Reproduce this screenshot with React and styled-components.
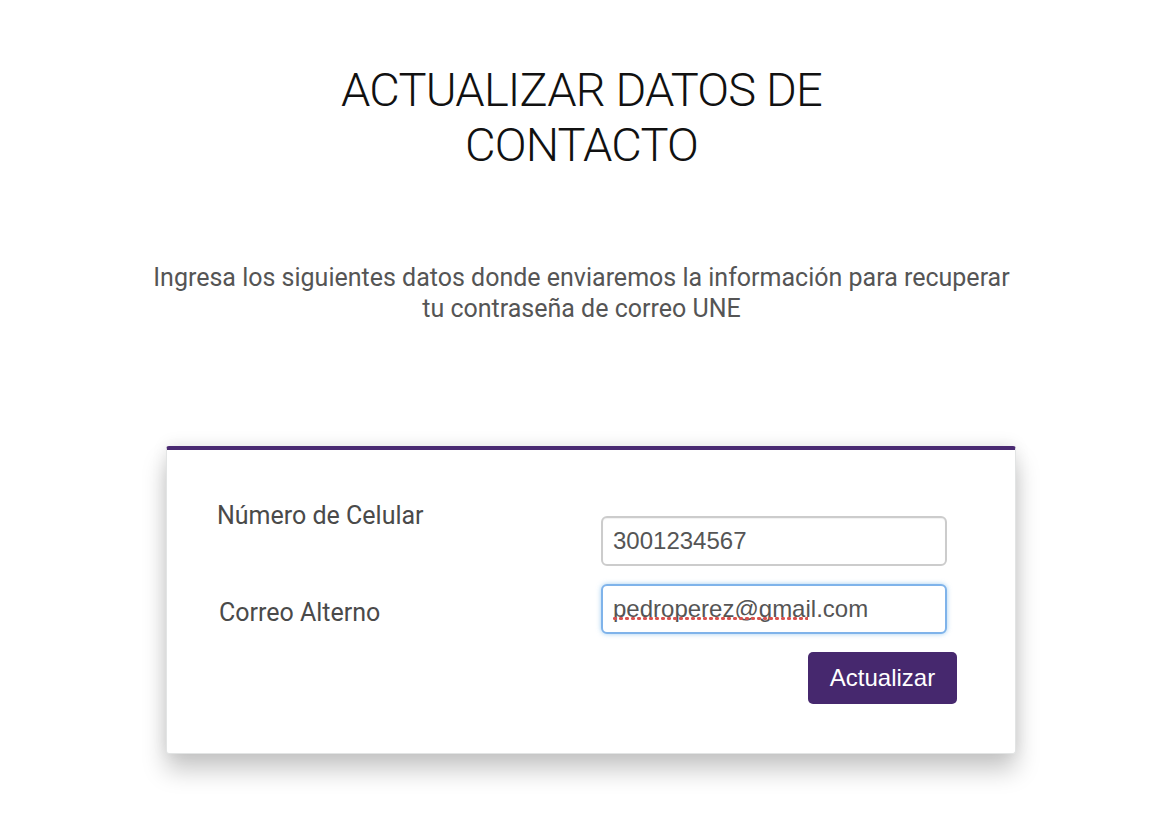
import React from 'react';
import styled, { createGlobalStyle } from 'styled-components';

const GlobalStyle = createGlobalStyle`
  html, body {
    margin: 0;
    padding: 0;
    background: #ffffff;
  }

  body {
    font-family: Roboto, "Noto Sans", sans-serif;
  }
`;

const Page = styled.main`
  width: 1163px;
  min-height: 817px;
  padding-top: 62px;
  box-sizing: border-box;
`;

const Title = styled.h1`
  margin: 0 auto;
  width: 520px;
  font-family: Roboto, sans-serif;
  font-weight: 300;
  font-size: 47px;
  letter-spacing: -0.8px;
  line-height: 55px;
  color: #111111;
  text-align: center;
  text-transform: uppercase;
`;

const Intro = styled.p`
  margin: 90px auto 0;
  width: 870px;
  font-family: Roboto, sans-serif;
  font-size: 25px;
  line-height: 31px;
  color: #555555;
  text-align: center;
`;

const Card = styled.section`
  margin: 122px 0 0 166px;
  width: 850px;
  box-sizing: border-box;
  background: #ffffff;
  border: 1px solid #e2e4e4;
  border-top: 4px solid #4a2a72;
  border-radius: 3px;
  box-shadow: 0 16px 24px rgba(0, 0, 0, 0.22), 0 -2px 16px rgba(0, 0, 0, 0.08);
  padding: 51px 58px 49px 50px;
`;

const Form = styled.form`
  display: grid;
  grid-template-columns: 384px 346px;
  row-gap: 18px;
`;

const Label = styled.label`
  font-family: Roboto, sans-serif;
  font-size: 25px;
  line-height: 30px;
  color: #4a4a4a;
  padding-left: ${(props) => props.$indent || 0}px;
  margin-top: ${(props) => props.$offset || 0}px;
`;

const Field = styled.div`
  position: relative;
  margin-top: ${(props) => props.$offset || 0}px;
`;

const Input = styled.input`
  display: block;
  width: 346px;
  height: 50px;
  box-sizing: border-box;
  padding: 0 10px;
  font-family: "Liberation Sans", Arial, sans-serif;
  font-size: 24px;
  color: #555555;
  background: #ffffff;
  border: 2px solid ${(props) => (props.$focused ? '#7fb3ea' : '#cccccc')};
  border-radius: 6px;
  box-shadow: ${(props) =>
    props.$focused
      ? '0 0 5px rgba(102, 175, 233, 0.6)'
      : 'inset 0 1px 1px rgba(0, 0, 0, 0.06)'};
  outline: none;
`;

/* spellcheck squiggle drawn over the misspelled part of the value */
const SpellMark = styled.span`
  position: absolute;
  left: 11px;
  top: 32px;
  height: 5px;
  pointer-events: none;
  background-image: radial-gradient(circle, #d9534f 1.7px, transparent 2px);
  background-size: 6px 5px;
  background-repeat: repeat-x;
`;

const Actions = styled.div`
  grid-column: 2;
  display: flex;
  justify-content: flex-end;
  margin-right: -10px;
`;

const SubmitButton = styled.button`
  width: 149px;
  height: 52px;
  border: none;
  border-radius: 5px;
  background: #46286e;
  color: #ffffff;
  font-family: "Liberation Sans", Arial, sans-serif;
  font-size: 24px;
  cursor: pointer;
`;

export default function App() {
  return (
    <>
      <GlobalStyle />
      <Page>
        <Title>Actualizar datos de contacto</Title>
        <Intro>
          Ingresa los siguientes datos donde enviaremos la información para recuperar
          tu contraseña de correo UNE
        </Intro>
        <Card>
          <Form onSubmit={(e) => e.preventDefault()}>
            <Label htmlFor="celular">Número de Celular</Label>
            <Field $offset={15}>
              <Input id="celular" defaultValue="3001234567" spellCheck={false} />
            </Field>
            <Label htmlFor="correo" $indent={2} $offset={14}>
              Correo Alterno
            </Label>
            <Field>
              <Input
                id="correo"
                defaultValue="pedroperez@gmail.com"
                spellCheck={false}
                $focused
              />
              <SpellMark style={{ width: 196 }} />
            </Field>
            <Actions>
              <SubmitButton type="submit">Actualizar</SubmitButton>
            </Actions>
          </Form>
        </Card>
      </Page>
    </>
  );
}
